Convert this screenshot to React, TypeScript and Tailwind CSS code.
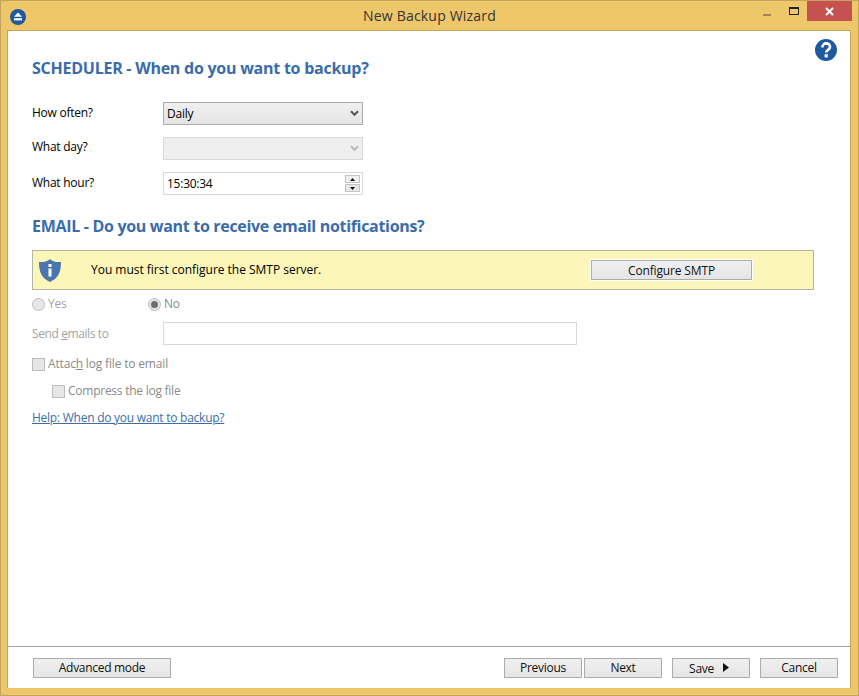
const font = "font-['Open_Sans','Noto_Sans',sans-serif]";

function Btn({ w, tracking, children }: { w: string; tracking?: string; children: React.ReactNode }) {
  return (
    <div className={`${w} ${tracking ?? "tracking-[-0.3px]"} h-[20px] flex items-center justify-center border border-[#acacac] bg-linear-to-b from-[#f0f0f0] to-[#e5e5e5] text-[12px] text-[#111]`}>
      {children}
    </div>
  );
}

function Chevron({ color }: { color: string }) {
  return (
    <svg width="9" height="7" viewBox="0 0 9 7" className="shrink-0">
      <path d="M1 1.2 L4.5 4.8 L8 1.2" fill="none" stroke={color} strokeWidth="2" />
    </svg>
  );
}

function Radio({ checked }: { checked?: boolean }) {
  return (
    <div className="w-[13px] h-[13px] rounded-full border border-[#bcbcbc] bg-[#e6e6e6] flex items-center justify-center shrink-0">
      {checked && <div className="w-[7px] h-[7px] rounded-full bg-[#6d6d6d]" />}
    </div>
  );
}

function Check() {
  return <div className="w-[13px] h-[13px] border border-[#bcbcbc] bg-[#e6e6e6] shrink-0" />;
}

export default function App() {
  return (
    <div className={`${font} w-[859px] h-[696px] flex flex-col border border-[#c3a45c] bg-[#eec76b] overflow-hidden`}>
      <div className="h-[29px] shrink-0 grid grid-cols-[1fr_auto_1fr] items-start">
        <div className="pl-[9px] pt-[8px]">
          <svg width="16" height="16" viewBox="0 0 16 16">
            <circle cx="8" cy="8" r="8" fill="#1f5aa0" />
            <path d="M8 3.6 L12 7.8 H4 Z" fill="#fff" />
            <rect x="4" y="9.2" width="8" height="2.2" fill="#fff" />
          </svg>
        </div>
        <div className="pt-[5px] text-[14px] leading-[20px] text-[#333] tracking-[0.2px]">New Backup Wizard</div>
        <div className="flex justify-end pr-[6px]">
          <div className="w-[8px] h-[2px] mt-[13px] bg-[#a08650]" />
          <div className="w-[10px] h-[8px] mt-[6px] ml-[18px] border border-[#222] border-t-[2px]" />
          <div className="w-[45px] h-[20px] ml-[8px] bg-[#c75050] flex items-center justify-center">
            <svg width="9" height="9" viewBox="0 0 9 9">
              <path d="M1 1 L8 8 M8 1 L1 8" stroke="#fff" strokeWidth="2" />
            </svg>
          </div>
        </div>
      </div>

      <div className="ml-[6px] mr-[7px] mb-[7px] flex-1 flex flex-col bg-white border border-[#c3a45c] border-b-0 min-h-0">
        <div className="flex-1 pl-[24px] pr-[13px] text-[12px] tracking-[-0.25px] text-[#000]">
          <div className="flex justify-between items-start">
            <div className="pt-[26px] text-[16px] leading-[22px] font-bold text-[#3a6cac] tracking-[-0.25px]">SCHEDULER - When do you want to backup?</div>
            <svg width="22" height="22" viewBox="0 0 22 22" className="mt-[8px]">
              <circle cx="11" cy="11" r="11" fill="#1f5aa0" />
              <path d="M7.4 8.4 C7.4 2.9 15 3.4 15 8 C15 11 11.2 10.8 11.2 13.6" fill="none" stroke="#fff" strokeWidth="2.6" />
              <rect x="9.6" y="15.2" width="3.2" height="3.2" fill="#fff" />
            </svg>
          </div>

          <div className="mt-[23px] flex flex-col gap-[12px]">
            <div className="flex items-start">
              <div className="w-[131px] leading-[18px] pt-[2px]">How often?</div>
              <div className="w-[200px] h-[23px] pl-[3px] pr-[3px] flex items-center justify-between border border-[#acacac] bg-linear-to-b from-[#f0f0f0] to-[#e5e5e5]">
                <span>Daily</span>
                <Chevron color="#555" />
              </div>
            </div>
            <div className="flex items-start">
              <div className="w-[131px] leading-[18px] pt-[1px]">What day?</div>
              <div className="w-[200px] h-[23px] pr-[3px] flex items-center justify-end border border-[#d9d9d9] bg-[#efefef]">
                <Chevron color="#bbb" />
              </div>
            </div>
            <div className="flex items-start">
              <div className="w-[131px] leading-[18px] pt-[2px]">What hour?</div>
              <div className="w-[200px] h-[23px] pl-[3px] pr-[2px] flex items-center justify-between border border-[#d9d9d9] bg-white">
                <span>15:30:34</span>
                <div className="flex flex-col gap-[1px]">
                  <div className="w-[15px] h-[8px] border border-[#c4c4c4] bg-[#f0f0f0] flex items-center justify-center">
                    <svg width="5" height="3" viewBox="0 0 7 4"><path d="M3.5 0 L7 4 H0 Z" fill="#111" /></svg>
                  </div>
                  <div className="w-[15px] h-[8px] border border-[#c4c4c4] bg-[#e6e6e6] flex items-center justify-center">
                    <svg width="5" height="3" viewBox="0 0 7 4"><path d="M0 0 H7 L3.5 4 Z" fill="#111" /></svg>
                  </div>
                </div>
              </div>
            </div>
          </div>

          <div className="mt-[20px] text-[16px] leading-[22px] font-bold text-[#3a6cac] tracking-[-0.31px]">EMAIL - Do you want to receive email notifications?</div>

          <div className="mt-[13px] w-[782px] h-[40px] flex items-center border border-[#b3b3a6] bg-[#fcf6b8]">
            <svg width="22" height="23" viewBox="0 0 22 23" className="ml-[6px]">
              <path d="M11 0 C13 2.4 17 3.4 22 3 C22 12 20 19 11 23 C2 19 0 12 0 3 C5 3.4 9 2.4 11 0 Z" fill="#4a76b0" />
              <rect x="9.5" y="5" width="3" height="3" fill="#fff" />
              <rect x="9.5" y="9.5" width="3" height="8" fill="#fff" />
            </svg>
            <div className="ml-[30px] w-[499px] tracking-[-0.02px] text-[#000]">You must first configure the SMTP server.</div>
            <div className="border border-white">
              <Btn w="w-[161px]" tracking="tracking-[-0.15px] pt-[1px]">Configure SMTP</Btn>
            </div>
          </div>

          <div className="text-[#a3a3a3]">
            <div className="mt-[7px] flex items-center h-[14px]">
              <div className="w-[116px] flex items-center gap-[3px]"><Radio /><span>Yes</span></div>
              <div className="flex items-center gap-[3px]"><Radio checked /><span className="text-[#8a8a8a]">No</span></div>
            </div>
            <div className="mt-[11px] flex items-center">
              <div className="w-[131px] tracking-[-0.4px]">Send <span className="underline">e</span>mails to</div>
              <div className="w-[414px] h-[23px] border border-[#d9d9d9] bg-white" />
            </div>
            <div className="mt-[12px] flex items-center gap-[3px] h-[14px] text-[#8a8a8a] tracking-[-0.17px]"><Check /><span>Attac<span className="underline">h</span> log file to email</span></div>
            <div className="mt-[13px] ml-[20px] flex items-center gap-[3px] h-[14px] text-[#8a8a8a]"><Check /><span>Compress the log file</span></div>
          </div>
          <div className="mt-[12px] leading-[16px] underline text-[#3a6ea8]">Help: When do you want to backup?</div>
        </div>

        <div className="h-[42px] shrink-0 border-t border-[#a0a0a0] pt-[11px] pl-[25px] pr-[12px] flex items-start">
          <Btn w="w-[138px]">Advanced mode</Btn>
          <div className="flex-1" />
          <div className="flex">
            <Btn w="w-[78px]">Previous</Btn>
            <div className="ml-[2px]"><Btn w="w-[78px]">Next</Btn></div>
            <div className="ml-[10px]">
              <Btn w="w-[78px]" tracking="tracking-[-0.3px] pr-[4px]">
                <span className="pt-[2px]">Save</span>
                <svg width="6" height="9" viewBox="0 0 6 9" className="ml-[9px] -mt-[2px]"><path d="M0 0 L6 4.5 L0 9 Z" fill="#111" /></svg>
              </Btn>
            </div>
            <div className="ml-[10px]"><Btn w="w-[78px]">Cancel</Btn></div>
          </div>
        </div>
      </div>
    </div>
  );
}
